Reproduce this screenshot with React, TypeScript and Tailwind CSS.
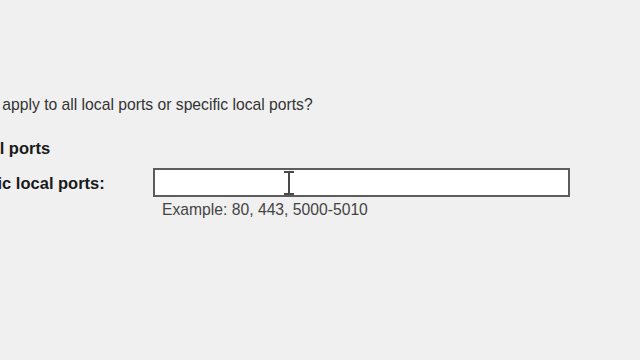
export default function App() {
  return (
    <div
      className="relative h-[360px] w-[640px] overflow-hidden bg-[#f0f0f0]"
      style={{ fontFamily: '"Liberation Sans", Arial, sans-serif' }}
    >
      {/* wizard page, cropped on the left */}
      <div className="-ml-[98px] pt-[95px]">
        <p className="whitespace-nowrap text-[15.7px] leading-[20px] text-[#333]">
          Does this rule apply to all local ports or specific local ports?
        </p>

        <div className="ml-[39px] mt-[23px] whitespace-nowrap text-[16.5px] font-bold leading-[20px] text-[#1a1a1a]">
          All local ports
        </div>

        <div className="mt-[10px] flex items-center">
          <span className="ml-[46px] w-[205px] whitespace-nowrap text-[16.5px] font-bold leading-[20px] text-[#1a1a1a]">
            Specific local ports:
          </span>
          <div className="relative h-[29px] w-[417px] border-2 border-[#5c5c5c] bg-white">
            <svg
              className="absolute left-[128px] top-[0px]"
              width="12"
              height="26"
              viewBox="0 0 12 26"
            >
              <path
                d="M1 2h10M6 2v22M1 24h10"
                stroke="#4a4a4a"
                strokeWidth="2"
                fill="none"
              />
            </svg>
          </div>
        </div>

        <div className="ml-[260px] mt-[3px] whitespace-nowrap text-[15.7px] leading-[20px] text-[#444]">
          Example: 80, 443, 5000-5010
        </div>
      </div>
    </div>
  );
}
